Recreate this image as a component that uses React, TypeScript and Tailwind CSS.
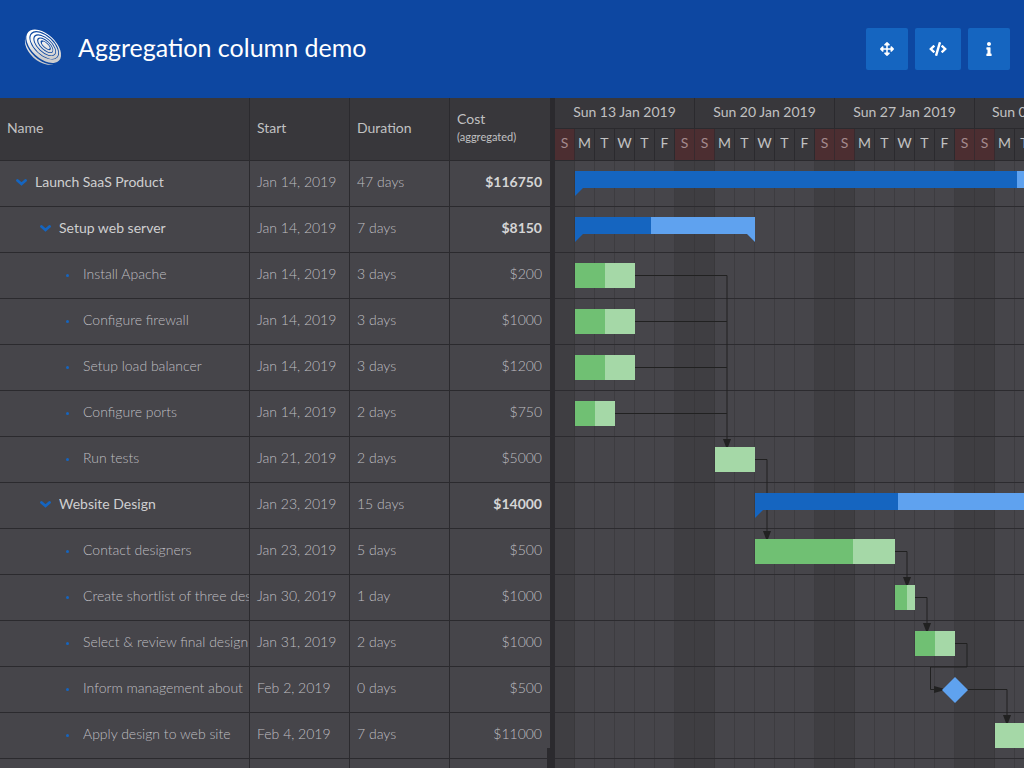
import React from "react";
import { FaArrowsAlt, FaCode, FaInfo } from "react-icons/fa";

type Task = {
  name: string;
  level: number;
  start: string;
  duration: string;
  cost: string;
  offset: number;
  days: number;
  done: number;
};

const DAY_WIDTH = 20;

const tasks: Task[] = [
  { name: "Launch SaaS Product", level: 0, start: "Jan 14, 2019", duration: "47 days", cost: "$116750", offset: 1, days: 67, done: 442 },
  { name: "Setup web server", level: 1, start: "Jan 14, 2019", duration: "7 days", cost: "$8150", offset: 1, days: 9, done: 76 },
  { name: "Install Apache", level: 2, start: "Jan 14, 2019", duration: "3 days", cost: "$200", offset: 1, days: 3, done: 30 },
  { name: "Configure firewall", level: 2, start: "Jan 14, 2019", duration: "3 days", cost: "$1000", offset: 1, days: 3, done: 30 },
  { name: "Setup load balancer", level: 2, start: "Jan 14, 2019", duration: "3 days", cost: "$1200", offset: 1, days: 3, done: 30 },
  { name: "Configure ports", level: 2, start: "Jan 14, 2019", duration: "2 days", cost: "$750", offset: 1, days: 2, done: 20 },
  { name: "Run tests", level: 2, start: "Jan 21, 2019", duration: "2 days", cost: "$5000", offset: 8, days: 2, done: 0 },
  { name: "Website Design", level: 1, start: "Jan 23, 2019", duration: "15 days", cost: "$14000", offset: 10, days: 21, done: 143 },
  { name: "Contact designers", level: 2, start: "Jan 23, 2019", duration: "5 days", cost: "$500", offset: 10, days: 7, done: 98 },
  { name: "Create shortlist of three designers", level: 2, start: "Jan 30, 2019", duration: "1 day", cost: "$1000", offset: 17, days: 1, done: 12 },
  { name: "Select & review final design", level: 2, start: "Jan 31, 2019", duration: "2 days", cost: "$1000", offset: 18, days: 2, done: 20 },
  { name: "Inform management about", level: 2, start: "Feb 2, 2019", duration: "0 days", cost: "$500", offset: 20, days: 0, done: 0 },
  { name: "Apply design to web site", level: 2, start: "Feb 4, 2019", duration: "7 days", cost: "$11000", offset: 22, days: 9, done: 0 },
];

const weeks = [
  "Sun 13 Jan 2019",
  "Sun 20 Jan 2019",
  "Sun 27 Jan 2019",
  "Sun 03 Feb 2019",
  "Sun 10 Feb 2019",
  "Sun 17 Feb 2019",
  "Sun 24 Feb 2019",
  "Sun 03 Mar 2019",
  "Sun 10 Mar 2019",
  "Sun 17 Mar 2019",
];
const dayLetters = ["S", "M", "T", "W", "T", "F", "S"];
const indents = ["pl-4", "pl-10", "pl-16"];

function Logo() {
  return (
    <svg viewBox="0 0 36 36" className="h-9 w-9 overflow-visible" aria-hidden="true">
      <defs>
        <linearGradient id="silver" gradientUnits="userSpaceOnUse" x1="10" y1="10" x2="26" y2="26">
          <stop offset="0" stopColor="#ffffff" />
          <stop offset="1" stopColor="#cdcdcd" />
        </linearGradient>
      </defs>
      <g transform="rotate(43 18 18)">
        <ellipse cx="18" cy="18.800" rx="20.500" ry="13.500" fill="url(#silver)" />
        <ellipse cx="18" cy="17.200" rx="22" ry="13.300" fill="#0d47a1" />
        <ellipse cx="18" cy="17" rx="21" ry="12" fill="url(#silver)" />
        <ellipse cx="17.700" cy="15.900" rx="18" ry="9.900" fill="#0d47a1" />
        <ellipse cx="18" cy="16.100" rx="17" ry="9" fill="url(#silver)" />
        <ellipse cx="18" cy="15.500" rx="14" ry="7.200" fill="#0d47a1" />
        <ellipse cx="18.300" cy="15.600" rx="13" ry="6.300" fill="url(#silver)" />
        <ellipse cx="18.400" cy="15.200" rx="10.200" ry="4.800" fill="#0d47a1" />
        <ellipse cx="18.700" cy="15.200" rx="9.200" ry="3.900" fill="url(#silver)" />
        <ellipse cx="18.800" cy="14.900" rx="6.600" ry="2.700" fill="#0d47a1" />
        <ellipse cx="19" cy="14.900" rx="5" ry="1.900" fill="url(#silver)" />
      </g>
    </svg>
  );
}

function Chevron() {
  return (
    <svg viewBox="0 0 11 7" className="h-[7px] w-[11px]" aria-hidden="true">
      <path d="M1.500 1.500L5.500 5L9.500 1.500" fill="none" stroke="currentColor" strokeWidth="2.800" strokeLinecap="round" />
    </svg>
  );
}

function ToolButton({ label, className, children }: { label: string; className: string; children: React.ReactNode }) {
  return (
    <button
      type="button"
      aria-label={label}
      className={`flex h-[42px] items-center justify-center rounded-xs bg-[#1565c0] text-sm text-white ${className}`}
    >
      {children}
    </button>
  );
}

function TaskGrid() {
  return (
    <table className="w-[550px] shrink-0 table-fixed border-separate border-spacing-0 self-start text-left">
      <colgroup>
        <col className="w-[250px]" />
        <col className="w-[100px]" />
        <col className="w-[100px]" />
        <col className="w-[100px]" />
      </colgroup>
      <thead className="bg-[#38373b] text-[#c1c1c2]">
        <tr className="h-[63px]">
          <th className="border-r border-b border-[#2b2a2e] px-[7px] pb-0.5 font-normal">Name</th>
          <th className="border-r border-b border-[#2b2a2e] px-[7px] pb-0.5 font-normal">Start</th>
          <th className="border-r border-b border-[#2b2a2e] px-[7px] pb-0.5 font-normal">Duration</th>
          <th className="border-b border-[#2b2a2e] px-[7px] pb-1 font-normal">
            <div className="leading-5">Cost</div>
            <div className="text-[11px] leading-4">(aggregated)</div>
          </th>
        </tr>
      </thead>
      <tbody className="font-light text-[#bfbec1]">
        {tasks.map((task) => {
          const parent = task.level < 2;
          return (
            <tr key={task.name} className="h-[46px]">
              <td className="border-r border-b border-[#2b2a2e] p-0 pb-1">
                <div className={`flex items-center overflow-hidden whitespace-nowrap ${indents[task.level]}`}>
                  {parent ? (
                    <button type="button" aria-label={`Collapse ${task.name}`} className="w-[19px] shrink-0 pt-0.5 text-[#1565c0]">
                      <Chevron />
                    </button>
                  ) : (
                    <span className="flex w-[19px] shrink-0 pt-1 pl-0.5">
                      <span className="size-[3px] rounded-full bg-[#1565c0]" />
                    </span>
                  )}
                  <span className={`min-w-0 flex-1 overflow-hidden ${parent ? "font-normal text-[#cfcfd0]" : ""}`}>
                    {task.name}
                  </span>
                </div>
              </td>
              <td className="border-r border-b border-[#2b2a2e] px-[7px] pb-1 whitespace-nowrap">{task.start}</td>
              <td className="border-r border-b border-[#2b2a2e] px-[7px] pb-1 whitespace-nowrap">{task.duration}</td>
              <td
                className={`border-b border-[#2b2a2e] px-2 pb-1 text-right ${parent ? "font-bold text-[#d5d5d6]" : ""}`}
              >
                {task.cost}
              </td>
            </tr>
          );
        })}
        <tr className="h-[46px]">
          <td className="border-r border-[#2b2a2e]" />
          <td className="border-r border-[#2b2a2e]" />
          <td className="border-r border-[#2b2a2e]" />
          <td />
        </tr>
      </tbody>
    </table>
  );
}

function TaskBar({ task }: { task: Task }) {
  const left = task.offset * DAY_WIDTH;
  const width = task.days * DAY_WIDTH;
  if (task.days === 0) {
    return (
      <svg viewBox="0 0 26 26" className="absolute top-2.5 -ml-[13px] size-[26px]" style={{ left }} aria-hidden="true">
        <path d="M13 0L26 13L13 26L0 13Z" fill="#5fa2ef" />
      </svg>
    );
  }
  if (task.level < 2) {
    return (
      <div className="absolute top-2.5" style={{ left, width }}>
        <div className="h-[17px] bg-[#5fa2ef]">
          <div className="h-full bg-[#1565c0]" style={{ width: task.done }} />
        </div>
        <div className="flex justify-between">
          <svg viewBox="0 0 8 8" className="size-2" aria-hidden="true">
            <path d="M0 0H8L0 8Z" fill="#1565c0" />
          </svg>
          <svg viewBox="0 0 8 8" className="size-2" aria-hidden="true">
            <path d="M0 0H8V8Z" fill="#5fa2ef" />
          </svg>
        </div>
      </div>
    );
  }
  return (
    <div className="absolute top-2.5 h-[25px] bg-[#a5d8a7]" style={{ left, width }}>
      <div className="h-full bg-[#70c073]" style={{ width: task.done }} />
    </div>
  );
}

function Dependencies() {
  return (
    <svg className="pointer-events-none absolute inset-0 h-full w-full" aria-hidden="true">
      <g fill="none" stroke="#212121">
        <path d="M80 114.500H172V280" />
        <path d="M80 160.500H172M80 206.500H172M60 252.500H172" />
        <path d="M200 298.500H212V372" />
        <path d="M340 390.500H352V418" />
        <path d="M360 436.500H372V464" />
        <path d="M400 482.500H412V506H375.500V528.500H382" />
        <path d="M412 528.500H452V556" />
      </g>
      <g fill="#212121">
        <path d="M168 278H176L173 286H171Z" />
        <path d="M208 370H216L213 378H211Z" />
        <path d="M348 416H356L353 424H351Z" />
        <path d="M368 462H376L373 470H371Z" />
        <path d="M379 525L388 527.500V529.500L379 532Z" />
        <path d="M448 554H456L453 562H451Z" />
      </g>
    </svg>
  );
}

function Timeline() {
  return (
    <div className="min-w-0 flex-1 overflow-hidden">
      <div className="flex h-[31px] border-b border-[#2b2a2e] bg-[#38373b] text-[#c1c1c2]">
        {weeks.map((week) => (
          <div key={week} className="w-[140px] shrink-0 border-r border-[#2b2a2e] pt-1 text-center whitespace-nowrap">
            {week}
          </div>
        ))}
      </div>
      <div className="flex h-8 border-b border-[#2b2a2e] bg-[#38373b] text-[#c1c1c2]">
        {weeks.map((week) =>
          dayLetters.map((letter, i) => (
            <div
              key={`${week}-${i}`}
              className={`w-5 shrink-0 border-r pt-1 text-center ${
                i === 0 || i === 6 ? "border-[#382a2e] bg-[#4c2e31] text-[#a58a8d]" : "border-[#2b2a2e]"
              }`}
            >
              {letter}
            </div>
          )),
        )}
      </div>
      <div className="relative">
        <div className="absolute inset-0 flex overflow-hidden">
          {weeks.map((week) =>
            dayLetters.map((_, i) => (
              <div
                key={`${week}-${i}`}
                className={`w-5 shrink-0 border-r ${
                  i === 0 || i === 6 ? "border-[#39383b] bg-[#3f3e42]" : "border-[#3d3c40]"
                }`}
              />
            )),
          )}
        </div>
        <div className="absolute inset-0">
          {tasks.map((task) => (
            <div key={task.name} className="h-[46px] border-b border-[#2c2b2f]" />
          ))}
        </div>
        <Dependencies />
        {tasks.map((task) => (
          <div key={task.name} className="relative h-[46px]">
            <TaskBar task={task} />
          </div>
        ))}
        <div className="h-[46px]" />
      </div>
    </div>
  );
}

export default function App() {
  return (
    <div className="flex h-screen flex-col overflow-hidden bg-[#46454a] font-[Lato,sans-serif] text-sm">
      <header className="flex h-[98px] shrink-0 items-center justify-between bg-[#0d47a1] pr-3.5 pl-[25px] text-white">
        <div className="flex items-center gap-[17px] pb-1">
          <Logo />
          <h1 className="text-[25px] leading-8">Aggregation column demo</h1>
        </div>
        <div className="flex gap-[7px]">
          <ToolButton label="Fullscreen" className="w-[42px]">
            <FaArrowsAlt />
          </ToolButton>
          <ToolButton label="Show code" className="w-[46px]">
            <FaCode className="h-3.5 w-[18px]" />
          </ToolButton>
          <ToolButton label="Information" className="w-[42px]">
            <FaInfo />
          </ToolButton>
        </div>
      </header>
      <main className="relative flex min-h-0 flex-1">
        <TaskGrid />
        <div className="w-[5px] shrink-0 bg-[#2b2a2e]" />
        <Timeline />
        <div className="absolute bottom-0 left-[547px] h-5 w-[3px] bg-[#2b2a2e]" />
      </main>
    </div>
  );
}
